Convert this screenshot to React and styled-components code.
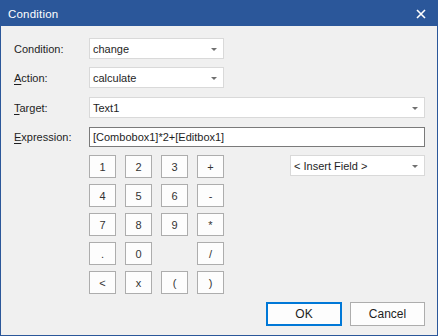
import React from 'react';
import styled, { createGlobalStyle } from 'styled-components';

const GlobalStyle = createGlobalStyle`
  html, body {
    margin: 0;
    padding: 0;
    background: #f0f0f0;
  }
  body {
    font-family: "Liberation Sans", Arial, sans-serif;
    font-size: 11px;
  }
`;

const Window = styled.div`
  box-sizing: border-box;
  width: 438px;
  height: 336px;
  border: 1px solid #2b579a;
  background: #f0f0f0;
  display: flex;
  flex-direction: column;
`;

const TitleBar = styled.div`
  height: 25px;
  background: #2b579a;
  color: #fff;
  display: flex;
  align-items: center;
  justify-content: space-between;
  padding: 0 11px 0 7px;
  font-size: 11.5px;
  letter-spacing: 0.2px;
`;

const CloseBtn = styled.div`
  width: 10px;
  height: 10px;
  display: flex;
  align-items: center;
  justify-content: center;
`;

const Body = styled.div`
  flex: 1;
  display: flex;
  flex-direction: column;
  padding: 12px 12px 9px 13px;
`;

const Row = styled.div`
  display: flex;
  align-items: center;
  height: 21px;
  margin-top: ${p => p.$gap || 0}px;
`;

const Label = styled.div`
  width: 75px;
  color: #1e1e1e;
  & u {
    text-decoration: underline;
    text-underline-offset: 2px;
  }
`;

const Box = styled.div`
  box-sizing: border-box;
  height: ${p => p.$h || 21}px;
  width: ${p => (p.$w ? `${p.$w}px` : 'auto')};
  flex: ${p => (p.$w ? '0 0 auto' : '1')};
  background: #fff;
  border: 1px solid ${p => (p.$dark ? '#7a7a7a' : '#d9d9d9')};
  display: flex;
  align-items: center;
  padding: 0 6px 0 3px;
  color: #1e1e1e;
`;

const BoxText = styled.span`
  flex: 1;
  white-space: nowrap;
`;

const Arrow = styled.span`
  width: 0;
  height: 0;
  border-left: 3px solid transparent;
  border-right: 3px solid transparent;
  border-top: 3px solid #707070;
  margin-top: 1px;
`;

const Middle = styled.div`
  display: flex;
  justify-content: space-between;
  align-items: flex-start;
  margin-top: 8px;
  padding-left: 75px;
`;

const Keypad = styled.div`
  display: grid;
  grid-template-columns: repeat(4, 27px);
  grid-auto-rows: 23px;
  column-gap: 9px;
  row-gap: 6px;
`;

const Key = styled.div`
  box-sizing: border-box;
  border: 1px solid #adadad;
  background: #fdfdfd;
  color: #333;
  display: flex;
  align-items: center;
  justify-content: center;
  visibility: ${p => (p.$empty ? 'hidden' : 'visible')};
`;

const Footer = styled.div`
  margin-top: auto;
  display: flex;
  justify-content: flex-end;
  gap: 8px;
`;

const Button = styled.div`
  box-sizing: border-box;
  width: ${p => p.$w}px;
  height: 24px;
  border: ${p => (p.$primary ? '2px solid #0078d7' : '1px solid #adadad')};
  background: #fdfdfd;
  color: #1e1e1e;
  font-size: 12px;
  display: flex;
  align-items: center;
  justify-content: center;
`;

const Combo = ({ value, w, h }) => (
  <Box $w={w} $h={h}>
    <BoxText>{value}</BoxText>
    <Arrow />
  </Box>
);

const keys = ['1', '2', '3', '+', '4', '5', '6', '-', '7', '8', '9', '*', '.', '0', '', '/', '<', 'x', '(', ')'];

export default function App() {
  return (
    <>
      <GlobalStyle />
      <Window>
        <TitleBar>
          <span>Condition</span>
          <CloseBtn>
            <svg width="10" height="10" viewBox="0 0 10 10">
              <path d="M1 1 L9 9 M9 1 L1 9" stroke="#fff" strokeWidth="1.6" />
            </svg>
          </CloseBtn>
        </TitleBar>
        <Body>
          <Row>
            <Label>Condition:</Label>
            <Combo value="change" w={135} />
          </Row>
          <Row $gap={8}>
            <Label><u>A</u>ction:</Label>
            <Combo value="calculate" w={135} />
          </Row>
          <Row $gap={9}>
            <Label><u>T</u>arget:</Label>
            <Combo value="Text1" />
          </Row>
          <Row $gap={8}>
            <Label><u>E</u>xpression:</Label>
            <Box $dark $h={20}>
              <BoxText>[Combobox1]*2+[Editbox1]</BoxText>
            </Box>
          </Row>
          <Middle>
            <Keypad>
              {keys.map((k, i) => (
                <Key key={i} $empty={k === ''}>{k}</Key>
              ))}
            </Keypad>
            <Combo value="< Insert Field >" w={135} />
          </Middle>
          <Footer>
            <Button $primary $w={76}>OK</Button>
            <Button $w={75}>Cancel</Button>
          </Footer>
        </Body>
      </Window>
    </>
  );
}
